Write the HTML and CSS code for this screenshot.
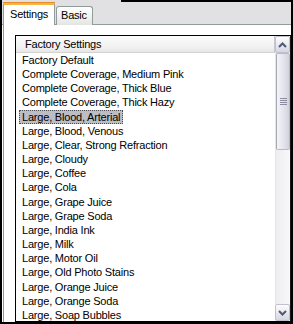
FILE: index.html
```html
<!DOCTYPE html>
<html lang="en">
  <head>
    <meta charset="UTF-8" />
    <title>Settings</title>
    <link rel="stylesheet" href="styles.css">
  </head>
  <body>
    <div class="window">
      <div class="tabs">
        <div class="tab tab-active">Settings</div>
        <div class="tab">Basic</div>
        <div class="tab-fill"></div>
      </div>

      <div class="panel">
        <div class="listbox">
          <div class="list-main">
            <div class="list-header">Factory Settings</div>
            <div class="list-rows">
              <div class="row"><span>Factory Default</span></div>
              <div class="row"><span>Complete Coverage, Medium Pink</span></div>
              <div class="row"><span>Complete Coverage, Thick Blue</span></div>
              <div class="row"><span>Complete Coverage, Thick Hazy</span></div>
              <div class="row row-selected"><span>Large, Blood, Arterial</span></div>
              <div class="row"><span>Large, Blood, Venous</span></div>
              <div class="row"><span>Large, Clear, Strong Refraction</span></div>
              <div class="row"><span>Large, Cloudy</span></div>
              <div class="row"><span>Large, Coffee</span></div>
              <div class="row"><span>Large, Cola</span></div>
              <div class="row"><span>Large, Grape Juice</span></div>
              <div class="row"><span>Large, Grape Soda</span></div>
              <div class="row"><span>Large, India Ink</span></div>
              <div class="row"><span>Large, Milk</span></div>
              <div class="row"><span>Large, Motor Oil</span></div>
              <div class="row"><span>Large, Old Photo Stains</span></div>
              <div class="row"><span>Large, Orange Juice</span></div>
              <div class="row"><span>Large, Orange Soda</span></div>
              <div class="row"><span>Large, Soap Bubbles</span></div>
            </div>
          </div>

          <div class="scrollbar">
            <div class="scroll-btn">
              <svg width="9" height="6" viewBox="0 0 9 6">
                <path d="M1 5 L4.5 1.5 L8 5" fill="none" stroke="#4d5a73" stroke-width="2" />
              </svg>
            </div>
            <div class="scroll-track">
              <div class="scroll-thumb">
                <div class="grip"></div>
                <div class="grip"></div>
                <div class="grip"></div>
                <div class="grip"></div>
              </div>
            </div>
            <div class="scroll-btn">
              <svg width="9" height="6" viewBox="0 0 9 6">
                <path d="M1 1 L4.5 4.5 L8 1" fill="none" stroke="#4d5a73" stroke-width="2" />
              </svg>
            </div>
          </div>
        </div>
      </div>
    </div>
  </body>
</html>
```

FILE: styles.css
```css
body {
  margin: 0;
  padding: 0;
  background-color: #ffffff;
  font-family: "Liberation Sans", Arial, sans-serif;
  font-size: 11px;
  letter-spacing: -0.2px;
  color: #000000;
}

.window {
  width: 293px;
  height: 324px;
  box-sizing: border-box;
  border-left: 2px solid #000000;
  border-right: 2px solid #000000;
  border-bottom: 2px solid #000000;
  display: flex;
  flex-direction: column;
  background-color: #ffffff;
}

.tabs {
  height: 25px;
  box-sizing: border-box;
  display: flex;
  align-items: flex-end;
  padding-left: 1px;
  background-color: #e1e1e4;
  border-bottom: 1px solid #919b9c;
}

.tab {
  height: 19px;
  box-sizing: border-box;
  margin-bottom: -1px;
  margin-left: 1px;
  padding: 2px 5px 0 4px;
  border: 1px solid #919b9c;
  border-bottom: none;
  border-radius: 3px 3px 0 0;
  background: linear-gradient(to bottom, #ffffff, #f0f0ee 60%, #e4e4e2);
}

.tab-active {
  height: 23px;
  width: 52px;
  margin-left: 0;
  padding: 3px 0 0 6px;
  border-top: 3px solid #f7b53c;
  background: #ffffff;
  position: relative;
}

.tab-active::before {
  content: "";
  position: absolute;
  left: -1px;
  right: -1px;
  top: -3px;
  height: 1px;
  background-color: #e68b2c;
}

.tab-fill {
  flex: 1;
  align-self: stretch;
  margin-left: 28px;
  border-top: 2px solid #000000;
}

.panel {
  flex: 1;
  display: flex;
  flex-direction: column;
  margin-left: 1px;
  border-left: 1px solid #919b9c;
  padding: 10px 0 0 11px;
  min-height: 0;
}

.listbox {
  flex: 1;
  min-height: 0;
  border: 1px solid #000000;
  border-right-color: #1a1a1a;
  display: flex;
}

.list-main {
  flex: 1;
  display: flex;
  flex-direction: column;
  min-width: 0;
}

.list-header {
  height: 17px;
  box-sizing: border-box;
  padding-left: 9px;
  line-height: 16px;
  background: linear-gradient(to bottom, #fbfbfb, #f1f1f1 70%, #e6e6e6);
  border-bottom: 1px solid #d3d3d0;
  border-right: 1px solid #c7c7cf;
}

.list-rows {
  flex: 1;
  overflow: hidden;
}

.row {
  height: 14.17px;
  line-height: 14px;
  padding-left: 4px;
  white-space: nowrap;
}

.row span {
  display: inline-block;
  padding: 0 2px;
  border: 1px solid transparent;
  margin-left: -1px;
  line-height: 12px;
}

.row-selected span {
  background-color: #bdbdc6;
  border: 1px dotted #4a4a52;
}

.scrollbar {
  width: 15px;
  display: flex;
  flex-direction: column;
  background-color: #f3f3f6;
}

.scroll-btn {
  height: 17px;
  box-sizing: border-box;
  border: 1px solid #c0c0cf;
  border-radius: 2px;
  background: linear-gradient(to bottom, #fdfdfe, #e6e6ee 60%, #d6d6e2);
  display: flex;
  align-items: center;
  justify-content: center;
}

.scroll-track {
  flex: 1;
  border-left: 1px solid #e4e4ea;
  background: linear-gradient(to right, #eeeef2, #f8f8fa);
}

.scroll-thumb {
  height: 97px;
  box-sizing: border-box;
  border: 1px solid #b9b9c9;
  border-left-color: #a8a8b5;
  border-radius: 2px;
  background: linear-gradient(to right, #f4f4f8, #e2e2ec 60%, #d2d2de);
  display: flex;
  flex-direction: column;
  align-items: center;
  justify-content: center;
  gap: 1px;
}

.grip {
  width: 7px;
  height: 1px;
  background-color: #8c8c9c;
}
```
